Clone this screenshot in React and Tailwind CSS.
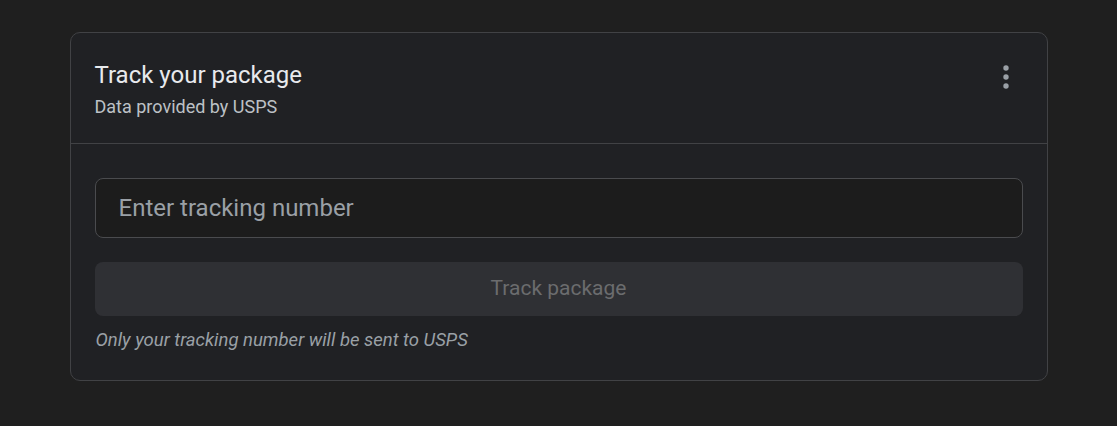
export default function App() {
  return (
    <div className="min-h-[426px] bg-[#1f1f1f] pt-8 font-['Roboto',sans-serif]">
      <div className="mx-auto w-[978px] rounded-[10px] border border-[#414245] bg-[#202124]">
        {/* Header */}
        <div className="flex items-start justify-between border-b border-[#414245] pl-6 pr-[36px] pt-[27px] pb-[25px]">
          <div>
            <h2 className="text-[24px] leading-[30px] text-[#e8eaed]">Track your package</h2>
            <p className="mt-[6px] text-[18px] leading-[22px] text-[#bdc1c6]">Data provided by USPS</p>
          </div>
          <button className="mt-[3px] text-[#9aa0a6]" aria-label="More options">
            <svg width="10" height="28" viewBox="0 0 10 28" fill="currentColor">
              <circle cx="5" cy="5" r="2.7" />
              <circle cx="5" cy="14" r="2.7" />
              <circle cx="5" cy="23" r="2.7" />
            </svg>
          </button>
        </div>

        {/* Body */}
        <div className="px-6 pt-[34px] pb-[29px]">
          <input
            type="text"
            placeholder="Enter tracking number"
            className="block h-[60px] w-full rounded-lg border border-[#4a4b4e] bg-[#1c1c1c] px-[23px] text-[24px] text-[#e8eaed] outline-none placeholder:text-[#9aa0a6]"
          />
          <button
            disabled
            className="mt-6 block h-[54px] w-full rounded-lg bg-[#2f3034] text-[21px] text-[#6b6c6e]"
          >
            Track package
          </button>
          <p className="mt-[13px] pl-px text-[18.5px] italic leading-[22px] text-[#9aa0a6]">
            Only your tracking number will be sent to USPS
          </p>
        </div>
      </div>
    </div>
  );
}
